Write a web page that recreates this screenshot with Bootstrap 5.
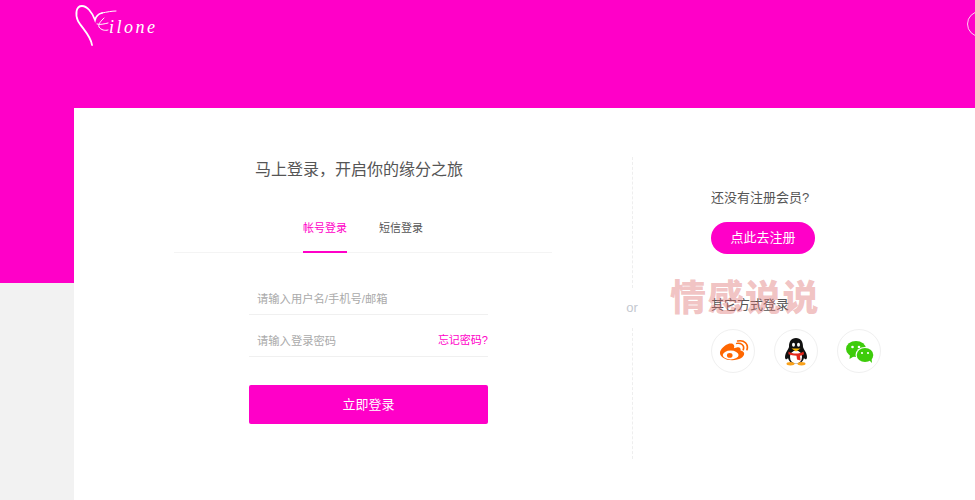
<!DOCTYPE html>
<html lang="zh">
<head>
<meta charset="utf-8">
<title>登录</title>
<link href="https://cdn.jsdelivr.net/npm/bootstrap@5.3.0/dist/css/bootstrap.min.css" rel="stylesheet">
<style>
html,body{height:100%;}
body{background:#f2f2f2;font-family:"Liberation Sans","Noto Sans CJK SC",sans-serif;color:#555;overflow:hidden;}
.hero-band{height:283px;background:#ff00c8;overflow:hidden;padding-left:74px;}
.logo-mark{display:block;width:86px;height:48px;}
.logo-word{font:italic 18px "Liberation Serif",serif;fill:#fff;letter-spacing:2.5px;}
.avatar-ring{width:26px;height:26px;border:1.5px solid #ffd0f2;border-radius:50%;margin-top:11px;margin-right:-18px;}
.panel-main{margin:-175px 0 0 74px;height:392px;background:#fff;position:relative;padding-top:49px;}
.left-side{width:558px;}
.title-text{font-size:16px;line-height:24px;color:#555;margin:1px 0 0 66px;width:438px;text-align:center;}
.tab-row{margin:28px 0 0 100px;width:378px;border-bottom:1px solid #f4f4f4;height:43px;gap:32px;}
.tab-link{font-size:11px;line-height:18px;color:#555;padding:9px 0 14px;height:43px;border-bottom:2px solid transparent;margin-bottom:-1px;}
.tab-link.is-on{color:#ff00c8;border-bottom-color:#ff00c8;}
.form-area{width:239px;margin:20px 0 0 175px;}
.field-row{height:42px;border-bottom:1.5px solid #f0f0f0;}
.field-input{border:0;border-radius:0;padding:0 0 0 8px;font-size:11.3px;height:30px;box-shadow:none;background:transparent;}
.field-input::placeholder{color:#aaa;}
.forgot-link{font-size:11px;line-height:30px;color:#ff00c8;text-decoration:none;white-space:nowrap;margin-bottom:1px;}
.submit-btn{display:block;width:100%;height:39px;margin-top:28px;background:#ff00c8;border:0;border-radius:2px;color:#fff;font-size:13px;}
.split-col{width:0;height:302px;}
.dash-seg{flex:0 0 131px;width:0;border-left:1px dashed #eee;}
.or-text{flex:0 0 40px;line-height:40px;font-size:13px;color:#c4c8d0;width:30px;text-align:center;}
.right-side{padding:32px 0 0 79px;}
.side-label{font-size:13px;line-height:18px;color:#555;margin:0;}
.register-btn{display:inline-block;width:104px;height:32px;line-height:32px;margin-top:15px;padding:0;border:0;border-radius:16px;background:#ff00c8;color:#fff;font-size:13px;text-align:center;}
.other-label{margin-top:42px;}
.social-row{gap:19px;margin-top:15px;}
.social-disc{display:block;width:44px;height:44px;border:1px solid #f0f0f0;border-radius:50%;background:#fff;}
.social-disc svg{display:block;width:42px;height:42px;}
.stamp-text{position:absolute;left:596px;top:165px;font:900 36px/44px "Noto Sans CJK SC",sans-serif;letter-spacing:1.500px;color:rgba(222,110,110,.42);white-space:nowrap;pointer-events:none;}
</style>
</head>
<body>
<header class="hero-band d-flex justify-content-between align-items-start">
  <a href="#" class="d-block" aria-label="logo">
    <svg class="logo-mark" viewBox="0 0 86 48" fill="none" stroke="#fff" stroke-linecap="round">
      <path d="M18 45C17 36 8 28 4 21 1 14 2 6 8 6c5 0 10 6 13 14 1-4 3-6 7-7" stroke-width="1.800"/>
      <path d="M28 13c5-1 10-2 14-2M30 18c-3 3-6 6-5 9 2 3 6 4 9 3M23 24c3 1 7 0 11-1" stroke-width="1"/>
      <text class="logo-word" x="35" y="33" stroke="none">ilone</text>
    </svg>
  </a>
  <div class="avatar-ring"></div>
</header>
<main class="panel-main d-flex">
  <section class="left-side">
    <h1 class="title-text fw-normal">马上登录，开启你的缘分之旅</h1>
    <nav class="tab-row d-flex justify-content-center">
      <a class="tab-link is-on text-decoration-none" href="#">帐号登录</a>
      <a class="tab-link text-decoration-none" href="#">短信登录</a>
    </nav>
    <form class="form-area">
      <div class="field-row d-flex align-items-end"><input class="form-control field-input" type="text" placeholder="请输入用户名/手机号/邮箱"></div>
      <div class="field-row d-flex align-items-end"><input class="form-control field-input" type="password" placeholder="请输入登录密码"><a class="forgot-link" href="#">忘记密码?</a></div>
      <button class="btn submit-btn" type="button">立即登录</button>
    </form>
  </section>
  <div class="split-col d-flex flex-column align-items-center">
    <div class="dash-seg"></div>
    <div class="or-text">or</div>
    <div class="dash-seg"></div>
  </div>
  <aside class="right-side">
    <p class="side-label">还没有注册会员?</p>
    <a class="btn register-btn" href="#">点此去注册</a>
    <p class="side-label other-label">其它方式登录</p>
    <div class="social-row d-flex">
      <a class="social-disc" href="#" aria-label="微博">
        <svg viewBox="0 0 42 42">
          <g transform="matrix(.93 0 0 .8 2.400 3.800)">
          <path d="M16 12c-5 2-10 7-10 12 0 5 6 9 13 9 8 0 13-4 13-8 0-3-3-4-4-4 1-3-1-5-4-4l-3 1c1-3 0-5-2-6-1 0-2 0-3 0z" fill="#f60"/>
          <ellipse cx="17.500" cy="26.500" rx="8.500" ry="5.500" fill="#fff"/>
          <circle cx="16.500" cy="27" r="3" fill="#f60"/>
          <path d="M24 12c4-1 9 2 7 8M25 9c7-2 12 4 10 11" fill="none" stroke="#f60" stroke-width="1.800" stroke-linecap="round"/>
          </g>
        </svg>
      </a>
      <a class="social-disc" href="#" aria-label="QQ">
        <svg viewBox="0 0 42 42">
          <g transform="matrix(1 0 0 .95 0 .5)">
          <path d="M21 8c-5 0-7 4-7 9 0 2-4 6-4 11 0 3 2 3 3 1 1 4 4 6 8 6s7-2 8-6c1 2 3 2 3-1 0-5-4-9-4-11 0-5-2-9-7-9z" fill="#111"/>
          <ellipse cx="21" cy="28" rx="6" ry="7" fill="#fff"/>
          <ellipse cx="18.500" cy="15" rx="1.500" ry="2.200" fill="#fff"/><ellipse cx="23.500" cy="15" rx="1.500" ry="2.200" fill="#fff"/>
          <path d="M16.500 19h9l-4.500 3z" fill="#fb0"/>
          <path d="M13.500 22c4 3 11 3 15 0l.5 3c-1 1-3 1.500-4 1.500l.5 5-3.500-1-.5-4c-3 0-6-.5-8-1.500z" fill="#e3271b"/>
          <ellipse cx="15.500" cy="35" rx="4" ry="1.800" fill="#f9a11b"/><ellipse cx="26.500" cy="35" rx="4" ry="1.800" fill="#f9a11b"/>
          </g>
        </svg>
      </a>
      <a class="social-disc" href="#" aria-label="微信">
        <svg viewBox="0 0 42 42">
          <ellipse cx="18" cy="19" rx="10" ry="8" fill="#3dcc0a"/>
          <path d="M12 24l-.5 5 5-3z" fill="#3dcc0a"/>
          <circle cx="14.500" cy="17" r="1.300" fill="#fff"/><circle cx="21" cy="17" r="1.300" fill="#fff"/>
          <ellipse cx="27" cy="25" rx="9.500" ry="8" fill="#fff"/>
          <ellipse cx="27" cy="25" rx="8.300" ry="7" fill="#3dcc0a"/>
          <path d="M31 30l3 3-.5-5z" fill="#3dcc0a"/>
          <circle cx="24" cy="23" r="1.100" fill="#fff"/><circle cx="30" cy="23" r="1.100" fill="#fff"/>
        </svg>
      </a>
    </div>
  </aside>
  <div class="stamp-text">情感说说</div>
</main>
<script src="https://cdn.jsdelivr.net/npm/bootstrap@5.3.0/dist/js/bootstrap.bundle.min.js"></script>
</body>
</html>
